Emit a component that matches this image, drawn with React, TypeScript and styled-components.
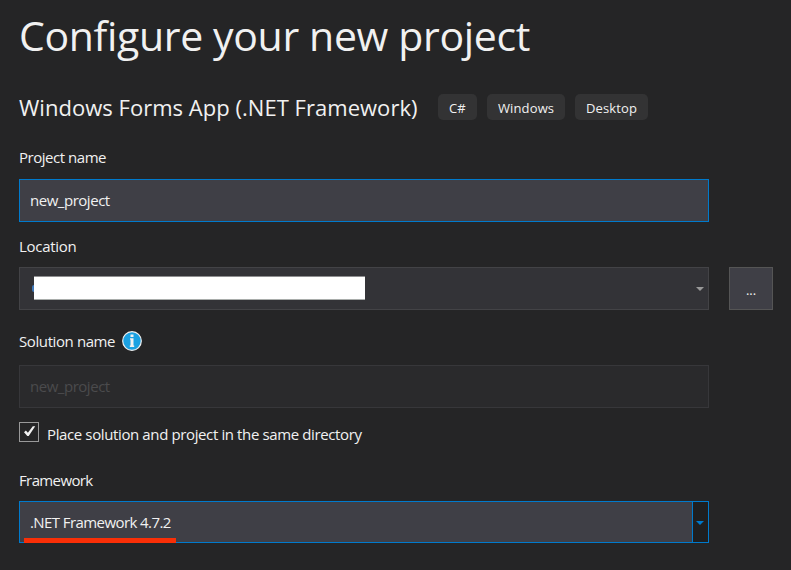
import React from "react";
import styled, { createGlobalStyle } from "styled-components";

const GlobalStyle = createGlobalStyle`
  * { box-sizing: border-box; }
  html, body { margin: 0; background: #252526; overflow: hidden; }
  body { font-family: "Open Sans", "Noto Sans", sans-serif; font-size: 15px; color: #f1f1f1; }
`;

const Page = styled.main`
  width: 791px;
  height: 570px;
  padding: 7px 18px 0 19px;
  background: #252526;
`;

const Title = styled.h1`
  margin: 0;
  width: max-content;
  font-size: 41px;
  font-weight: 400;
  line-height: 56px;
  white-space: nowrap;
  letter-spacing: -0.35px;
`;

const Template = styled.div`
  display: flex;
  align-items: center;
  height: 26px;
  margin-top: 31px;
`;

const TemplateName = styled.h2`
  flex: 0 0 419px;
  margin: 0;
  font-size: 22px;
  font-weight: 400;
  line-height: 26px;
  white-space: nowrap;
  letter-spacing: 0.03px;
`;

const Tags = styled.div`
  display: flex;
  gap: 10px;
`;

const Tag = styled.span<{ $width: number; $spacing: number }>`
  width: ${(p) => p.$width}px;
  height: 26px;
  padding-left: 11px;
  border-radius: 5px;
  background: #333334;
  font-size: 13px;
  line-height: 28px;
  white-space: nowrap;
  letter-spacing: ${(p) => p.$spacing}px;
`;

const Field = styled.section<{ $top: number; $gap: number }>`
  display: flex;
  flex-direction: column;
  gap: ${(p) => p.$gap}px;
  margin-top: ${(p) => p.$top}px;
`;

const LabelRow = styled.div`
  display: flex;
  align-items: center;
  gap: 7px;
  height: 20px;
`;

const Text = styled.span<{ $spacing: number }>`
  font-size: 15px;
  line-height: 20px;
  white-space: nowrap;
  letter-spacing: ${(p) => p.$spacing}px;
`;

const ControlRow = styled.div`
  display: flex;
  gap: 20px;
`;

const tones = {
  focused: ["#3f3f46", "#007acc", "#f1f1f1"],
  normal: ["#333337", "#434346", "#f1f1f1"],
  disabled: ["#2a2a2c", "#37373a", "#4b4b4d"],
};

const Box = styled.div<{ $tone: keyof typeof tones; $short?: boolean }>`
  display: flex;
  align-items: center;
  width: 690px;
  height: ${(p) => (p.$short ? 42 : 43)}px;
  padding: 0 0 ${(p) => (p.$short ? 0 : 1)}px 10px;
  background: ${(p) => tones[p.$tone][0]};
  border: 1px solid ${(p) => tones[p.$tone][1]};
  color: ${(p) => tones[p.$tone][2]};
`;

const HiddenEdge = styled.span`
  width: 2px;
  height: 7px;
  margin-left: 2px;
  border-radius: 2px 0 0 2px;
  background: #3f78b8;
`;

const Redaction = styled.div`
  width: 331px;
  height: 24px;
  background: #fff;
  border-top: 1px solid #8e8e90;
  border-bottom: 1px solid #a9adab;
`;

const ArrowCell = styled.div<{ $active?: boolean }>`
  display: flex;
  align-items: center;
  align-self: stretch;
  width: 16px;
  padding: 2px 0 0 ${(p) => (p.$active ? 3 : 4)}px;
  margin-left: auto;
  background: ${(p) => (p.$active ? "#1f1f20" : "transparent")};
  border-left: ${(p) => (p.$active ? "1px solid #007acc" : "0")};
  color: ${(p) => (p.$active ? "#007acc" : "#999999")};
`;

const Browse = styled.button`
  width: 44px;
  height: 43px;
  padding: 2px 0 0;
  background: #3f3f46;
  border: 1px solid #555555;
  color: #f1f1f1;
  font: 13px/20px "Open Sans", sans-serif;
  letter-spacing: -0.1px;
`;

const CheckRow = styled.label`
  display: flex;
  gap: 8px;
  height: 22px;
  margin-top: 14px;
`;

const CheckBox = styled.span`
  width: 20px;
  height: 20px;
  border: 1px solid #999999;
  background: #252526;
`;

const CheckText = styled.div`
  padding-top: 2px;
`;

const Underline = styled.span`
  position: absolute;
  left: 5px;
  bottom: 0;
  width: 152px;
  height: 5px;
  background: #f92f07;
`;

const Marked = styled.div`
  position: relative;
`;

const Arrow = () => (
  <svg width="8" height="4" viewBox="0 0 8 4" display="block">
    <path d="M0 0H8L4 4Z" fill="currentColor" />
  </svg>
);

const InfoIcon = () => (
  <svg width="20" height="20" viewBox="0 0 20 20">
    <circle cx="10" cy="10" r="9.3" fill="#1ba1e2" stroke="#f1f1f1" strokeWidth="1.2" />
    <path d="M8.5 3.5h3v2.5h-3zM8 7.2h3.5v7.3h.7v1.5H7.8v-1.5h.7V8.5H8z" fill="#f1f1f1" />
  </svg>
);

export default function App() {
  return (
    <>
      <GlobalStyle />
      <Page>
        <Title>Configure your new project</Title>
        <Template>
          <TemplateName>Windows Forms App (.NET Framework)</TemplateName>
          <Tags>
            <Tag $width={39} $spacing={0}>C#</Tag>
            <Tag $width={78} $spacing={0.12}>Windows</Tag>
            <Tag $width={73} $spacing={0.14}>Desktop</Tag>
          </Tags>
        </Template>

        <Field $top={27} $gap={12}>
          <LabelRow><Text $spacing={-0.47}>Project name</Text></LabelRow>
          <Box $tone="focused"><Text $spacing={-0.47}>new_project</Text></Box>
        </Field>

        <Field $top={14} $gap={11}>
          <LabelRow><Text $spacing={-0.3}>Location</Text></LabelRow>
          <ControlRow>
            <Box $tone="normal">
              <HiddenEdge />
              <Redaction />
              <ArrowCell><Arrow /></ArrowCell>
            </Box>
            <Browse>...</Browse>
          </ControlRow>
        </Field>

        <Field $top={21} $gap={14}>
          <LabelRow>
            <Text $spacing={-0.4}>Solution name</Text>
            <InfoIcon />
          </LabelRow>
          <Box $tone="disabled"><Text $spacing={-0.47}>new_project</Text></Box>
        </Field>

        <CheckRow>
          <CheckBox>
            <svg width="18" height="18" viewBox="0 0 18 18" display="block">
              <path d="M4 9.2L5.9 7.4L7.9 9.8L12.8 3.2H15.2L8.7 13H7.3Z" fill="#f1f1f1" />
            </svg>
          </CheckBox>
          <CheckText><Text $spacing={-0.38}>Place solution and project in the same directory</Text></CheckText>
        </CheckRow>

        <Field $top={26} $gap={11}>
          <LabelRow><Text $spacing={-0.62}>Framework</Text></LabelRow>
          <Marked>
            <Box $tone="focused" $short>
              <Text $spacing={-0.58}>.NET Framework 4.7.2</Text>
              <ArrowCell $active><Arrow /></ArrowCell>
            </Box>
            <Underline />
          </Marked>
        </Field>
      </Page>
    </>
  );
}
